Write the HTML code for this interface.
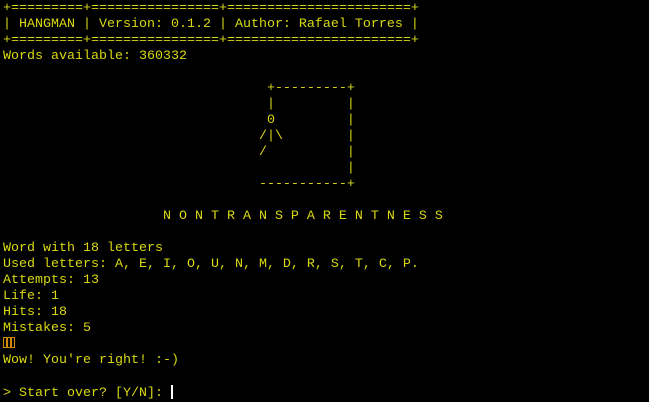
<!DOCTYPE html>
<html><head><meta charset="utf-8"><style>
html,body{margin:0;background:#000;width:649px;height:400px;overflow:hidden}
pre{margin:0;position:absolute;left:3px;top:1px;font-family:"Liberation Mono",monospace;font-size:13.33px;line-height:16px;color:#d8d810;letter-spacing:0}
.b{display:inline-block;width:2px;height:9px;border:1px solid #d08a00;margin-right:0;vertical-align:-1px}
.c{display:inline-block;width:2px;height:14px;background:#fff;vertical-align:-3px}
</style></head><body>
<pre>+=========+================+=======================+
| HANGMAN | Version: 0.1.2 | Author: Rafael Torres |
+=========+================+=======================+
Words available: 360332

                                 +---------+
                                 |         |
                                 0         |
                                /|\        |
                                /          |
                                           |
                                -----------+

                    N O N T R A N S P A R E N T N E S S

Word with 18 letters
Used letters: A, E, I, O, U, N, M, D, R, S, T, C, P.
Attempts: 13
Life: 1
Hits: 18
Mistakes: 5
<span class="b"></span><span class="b"></span><span class="b"></span>
Wow! You're right! :-)

&gt; Start over? [Y/N]: <span class="c"></span></pre>
</body></html>
